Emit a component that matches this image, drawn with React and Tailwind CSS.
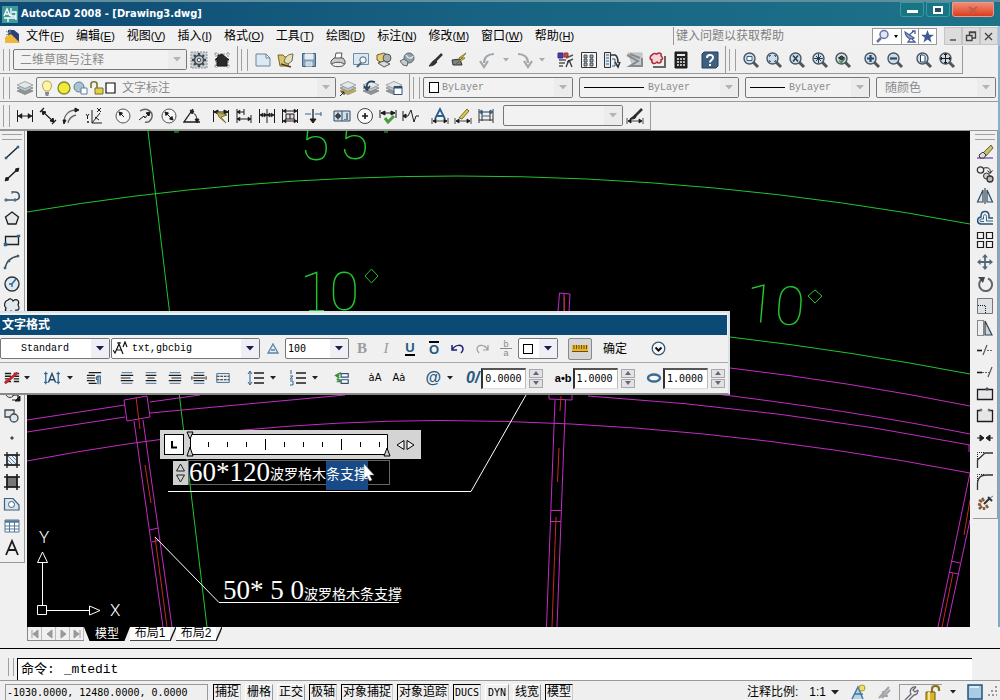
import React from "react";

const K = "#1c1c1c";
const B = "#2f6591";

const P = ({ d, s = K, f = "none", w = 1, ...rest }) => (
  <path d={d} stroke={s} fill={f} strokeWidth={w} {...rest} />
);
const Lens = ({ children }) => (
  <>
    <P d="M11 11L16 16" s="#555" w={3} />
    <circle cx="7.5" cy="7.5" r="5.5" fill="#cfdce6" stroke="#4a5560" strokeWidth="1.4" />
    {children}
  </>
);
const Ends = () => <P d="M1.500 3V15M16.500 3V15" />;
const ARR = "M2 9L6 6.500V11.500ZM16 9L12 6.500V11.500Z";
const Sheets = () => (
  <>
    <P d="M1 12L9 8.500L17 12L9 15.500Z" s="#777" f="#8f979c" w={0.7} />
    <P d="M1 9L9 5.500L17 9L9 12.500Z" s="#777" f="#b9c4ca" w={0.7} />
    <P d="M1 6L9 2.500L17 6L9 9.500Z" s="#888" f="#e3e8ea" w={0.7} />
  </>
);

const ART = {
  gear: (
    <>
      <P d="M1 1H17V17H1Z" s="#8b9297" f="#c9ced1" strokeDasharray="2 1" />
      <P d="M9 2V16M2 9H16M4 4L14 14M14 4L4 14" s="#3f4a52" w={2.4} />
      <circle cx="9" cy="9" r="4.500" fill="#c9ced1" stroke="#3f4a52" strokeWidth="1.500" />
      <circle cx="9" cy="9" r="1.800" fill="#eee" stroke="#3f4a52" />
    </>
  ),
  home: (
    <>
      <P d="M1 3H17M1 15H17M3 1V17M15 1V17" s="#8b9297" strokeDasharray="2 1" />
      <P d="M2 9L5 6V4H7L9 3L16 9H14V15H4V9Z" s={K} f="#2a2a2a" />
    </>
  ),
  new: <P d="M2 3H12L16 7V15H2ZM12 3V7H16" s="#6486a3" f="#dce9f3" />,
  open: (
    <>
      <P d="M3 15L1 4H6L8 6H13L11 15Z" s="#77652a" f="#d8c46a" />
      <P d="M7 11C8 5 12 3 16 3L15 10L11 13Z" s="#666" f="#e9e0b0" />
      <P d="M4 13L14 16" s="#4c4215" w={1.500} />
    </>
  ),
  save: (
    <>
      <P d="M2.500 2.500H15.500V15.500H2.500Z" s="#41617c" f="#7fa0ba" />
      <P d="M5 3H13V8H5Z" s="#e5edf3" f="#e5edf3" />
      <P d="M6 11H12V15H6Z" s="#dfe8ee" f="#c7d3dc" />
    </>
  ),
  print: (
    <>
      <P d="M6 7L7 2H13L12 7" s="#555" f="#fff" />
      <P d="M2 10L5 7H14L16 10V13H2Z" s="#555" f="#c6cbcf" />
      <ellipse cx="9" cy="13.500" rx="6" ry="2.200" fill="#eee" stroke="#555" />
    </>
  ),
  preview: (
    <>
      <P d="M1.500 2.500H16.500V13.500H1.500Z" s="#6c8fa9" f="#dbe8f0" />
      <circle cx="11" cy="9" r="3.200" fill="#eff6fa" stroke="#46657e" />
      <P d="M9 12L5 16" s="#46657e" w={2} />
    </>
  ),
  publish: (
    <>
      <P d="M2 4L9 2L14 5V9L7 12L2 9Z" s="#6c5f2a" f="#e6cf76" />
      <circle cx="12" cy="7" r="4" fill="#a8b3b9" stroke="#555" />
      <P d="M3 12L9 10L15 13L9 16Z" s="#555" f="#ddd" />
    </>
  ),
  dwf: (
    <>
      <circle cx="11" cy="7" r="5" fill="#8ca0a8" stroke="#666" />
      <P d="M8 4C10 8 14 8 15 5" s="#dfe9ec" w={1.500} />
      <P d="M2 10L6 8L10 11L9 15L5 14Z" s="#666" f="#c5cacd" />
    </>
  ),
  brush: (
    <>
      <P d="M15 3L8 10" s="#333" w={2.500} />
      <P d="M2 15C4 13 5 10 8 9L10 11C8 14 5 15 2 15Z" s="#333" f="#333" />
    </>
  ),
  block: (
    <>
      <P d="M2 9L10 8L12 14H3Z" s="#333" f="#7b8387" />
      <P d="M16 2L9 7H12L6 13L15 7H12Z" s="#6d6314" f="#e1d14e" w={0.8} />
    </>
  ),
  undoBig: <P d="M15 3C9 3 5 6 5 12M1 10L5 16L9 10" s="#a3a8ac" w={2.200} />,
  redoBig: <P d="M3 3C9 3 13 6 13 12M9 10L13 16L17 10" s="#a3a8ac" w={2.200} />,
  props: (
    <>
      <P d="M1 2H6V7H1Z" s="#3a2b8c" f="#4a3aa8" />
      <P d="M7 2H11V6H7Z" s="#a33" f="#c64545" />
      <P d="M2 9H9M2 12H8M2 15H6M9 7L16 4M10 11L16 8" s="#555" w={1.400} />
      <P d="M12 9L9 16M12 9L15 16" s="#333" w={1.300} />
    </>
  ),
  center: (
    <>
      <P d="M1.500 1.500H16.500V16.500H1.500Z" s="#333" f="#f5f7f8" />
      <P d="M4 4H7V7H4ZM4 8H7V11H4ZM4 12H7V15H4ZM10 4H13V7H10ZM10 8H13V11H10ZM10 12H13V15H10Z" s="#333" f="#9db0bd" w={0.800} />
    </>
  ),
  palettes: (
    <>
      <P d="M1.500 1.500H7.500V16.500H1.500Z" s="#333" f="#dfe9f0" />
      <P d="M3 4H6M3 7H6M3 10H6M3 13H6" s={B} />
      <P d="M8 4H12C15 5 15 9 15 12M12 11L15 16L17 11" s="#333" w={1.600} />
      <P d="M9 8H12V15H9" s={B} />
    </>
  ),
  sheetset: (
    <>
      <P d="M2 2H16V15H7Z" s="#bbb" f="#c4c9cc" />
      <P d="M1 4L12 10L4 15H16V7M4 3L14 7" s="#858c91" w={2} />
    </>
  ),
  markup: (
    <>
      <P d="M4 16H16V5" s="#666" w={2} />
      <P d="M3 4C5 1 7 3 8 3C10 1 13 2 12 5C15 7 13 9 12 9C13 12 9 13 8 11C5 14 2 12 3 9C0 8 1 5 3 4Z" s="#ab2b35" f="#f5d5d8" w={1.500} />
    </>
  ),
  calc: (
    <>
      <P d="M3 1H15V17H3Z" f="#222" />
      <P d="M5 4H13" s="#e8e8e8" w={2} />
      <P d="M5 8H13M5 11H13M5 14H13" s="#eee" w={1.600} strokeDasharray="2 1" />
    </>
  ),
  help: (
    <>
      <P d="M1 3L3 1H17V15L15 17H1Z" s="#23405a" f="#3d5f80" />
      <P d="M6 7C6 3 12 3 12 6.500C12 9 9 9 9 11.500M9 13V15" s="#fff" w={2} />
    </>
  ),
  zWin: <Lens><P d="M5 5.500H10V9.500H5Z" s={B} f="#fff" /></Lens>,
  zDyn: <Lens><P d="M4.500 6V4.500H6M9 4.500H10.500V6M10.500 9V10.500H9M6 10.500H4.500V9" s={B} /></Lens>,
  zScale: <Lens><P d="M5 4.500L10 10.500M10 4.500L5 10.500" s="#23405a" w={1.500} /></Lens>,
  zCenter: <Lens><P d="M7.500 3V12M3 7.500H12M5 5L10 10M10 5L5 10" s="#23405a" /></Lens>,
  zObj: <Lens><P d="M4.500 7L7.500 5L10.500 7L7.500 9Z" f="#444" /><P d="M5 9.500L7.500 11.500L11 7" s="#3e8a3e" w={1.500} /></Lens>,
  zIn: <Lens><P d="M7.500 4V11M4 7.500H11" s="#1f4a70" w={2.200} /></Lens>,
  zOut: <Lens><P d="M4 7.500H11" s="#1f4a70" w={2.200} /></Lens>,
  zAll: <Lens><P d="M5.500 4H8.500L10 5.500V11H5.500Z" s="#23405a" f="#fff" /></Lens>,
  zExt: <Lens><P d="M7.500 2.500V12.500M2.500 7.500H12.500M6 4L7.500 2.500L9 4M6 11L7.500 12.500L9 11M4 6L2.500 7.500L4 9M11 6L12.500 7.500L11 9" /></Lens>,
  layers: <Sheets />,
  layA: <><Sheets /><P d="M2 11L9 14L17 11" s="#c4ae45" w={2} /><P d="M1 17L5 13M2 13H5V16" /></>,
  layB: <><Sheets /><P d="M13 3C7 1 4 4 5 9M2 7L5 11L8 7" s="#1f3f5c" w={1.600} /></>,
  layC: <><Sheets /><P d="M9 7.500H17V15.500H9Z" s="#2c5377" f="#fff" /><P d="M9 8.500H17" s="#2c5377" w={2} /></>,
  dLin: <><Ends /><P d="M2 9H16" /><P d={ARR} f={K} w={0.500} /></>,
  dAli: <><P d="M1 5L5 1M13 17L17 13M3 4L15 15" w={1.200} /><P d="M3 4L7 5L4 8ZM15 15L11 14L14 11Z" f={K} /></>,
  dArc: <><P d="M2 15C2 8 7 3 14 3M6 16C7 11 10 9 14 8" s="#666" w={1.300} /><P d="M13 1L17 3L13 5ZM1 13H4L2 17Z" f={K} /></>,
  dOrd: <><P d="M7 3V16H17M7 16L15 6M10 10L14 13" /><P d="M1 7L2.500 9L4 7M2.500 9V12M12 1L16 5M16 1L12 5" /><circle cx="3" cy="15" r="1" fill={K} /></>,
  dRad: <><circle cx="9" cy="9" r="7" fill="#f6f6f6" stroke="#555" /><P d="M10 10L5 5" /><P d="M5 5L8.500 6L6 8.500Z" f={K} /></>,
  dJog: <><P d="M3 4C9 0 16 4 15 10C14 14 11 16 8 15" s="#666" w={1.500} /><P d="M2 13L7 9L8 11L12 6" /><P d="M13 5L9 6L12 9Z" f={K} /></>,
  dDia: <><circle cx="9" cy="9" r="7" fill="#f6f6f6" stroke="#555" /><P d="M5 5L13 13" /><P d="M5 5L8.500 6L6 8.500ZM13 13L9.500 12L12 9.500Z" f={K} /></>,
  dAng: <><P d="M10 2L1 15H17" w={1.300} /><P d="M8 5C12 6 14 9 14 14" /><P d="M7 3L11 4L9 7ZM12 12L16 12L14 16Z" f={K} w={0.800} /></>,
  dQuick: <><Ends /><P d="M2 5H16" /><P d="M2 5L6 3V7ZM16 5L12 3V7Z" f={K} /><P d="M5 5L15 8L9 10L14 16L7 10Z" s="#7a7030" f="#bcb050" /></>,
  dBase: <><P d="M2 2V16M9 2V8M16 8V16" /><P d="M2 5H9M2 12H16" /><P d="M2 5L5 3V7ZM16 12L13 10V14ZM2 12L5 10V14Z" f={K} w={0.500} /></>,
  dCont: <><P d="M1.500 2V16M9 2V16M16.500 2V16M2 8H16" /><P d="M2 8L5 6V10ZM16 8L13 6V10ZM9 8L6 6V10ZM9 8L12 6V10Z" f={K} w={0.500} /></>,
  dTol: <><P d="M1.500 2V16M16.500 2V16M2 4H16M2 14H16" /><P d="M5 7H13V12H5ZM9 7V12" f="#e7d6d6" /><P d="M2 4L5 2V6ZM16 4L13 2V6ZM2 14L5 12V16ZM16 14L13 12V16Z" f={K} w={0.500} /></>,
  dBreak: <><P d="M1 7H7M11 7H17M17 5V9" s={B} /><P d="M9 2V12" w={1.300} /><P d="M6 12L9 16L12 12Z" f={K} /></>,
  dTolBox: <><P d="M1 4H17V14H1ZM9 4V14" s="#2d4a63" f="#cfe0ea" /><circle cx="5" cy="9" r="2" fill="none" stroke={K} /><P d="M5 5.500V12.500M2 9H8M12 12V13M14 6V13" /></>,
  dMark: <><circle cx="9" cy="9" r="7.500" fill="#fbfbfb" stroke="#444" /><P d="M9 6V12M6 9H12" w={1.600} /></>,
  dInsp: <><P d="M1 3V11M17 3V11M2 6H16" /><P d="M2 6L6 4V8ZM16 6L12 4V8Z" f={K} /><P d="M6 11L9 15L15 9" s="#4a9c3c" w={3} /></>,
  dJogL: <><P d="M1 4V14M1 9H6L9 3L12 15L14 9H17" /><P d="M1 9L4 7V11Z" f={K} /></>,
  dEdit: <><P d="M4 12L9 2L14 12M6 9H12" s="#2d5f8f" w={1.800} /><P d="M1 11V17M17 11V17M2 14H16M2 14L5 12V16ZM16 14L13 12V16Z" f={K} w={0.800} /></>,
  dTedit: <><P d="M5 11L13 2L15 4L8 12Z" s="#7a7030" f="#d5c94f" /><P d="M1 11V17M17 11V17M2 14H16M2 14L5 12V16ZM16 14L13 12V16Z" f={K} w={0.800} /></>,
  dUpd: <><P d="M2 2V16M5 4V14M16 2V16M13 4V14M2 5H16M2 13H16" s="#333" /><P d="M2 5L5 3V7ZM16 5L13 3V7ZM5 9H13" s={B} f={B} /></>,
  dStyle: <><P d="M16 2L9 9" s="#333" w={2.500} /><P d="M4 12C6 11 7 9 9 8L10 10C9 12 7 12 4 12Z" f="#333" /><P d="M1 11V17M17 11V17M2 14H16M2 14L5 12V16ZM16 14L13 12V16Z" f={K} w={0.800} /></>,
  line: <><P d="M3 15L15 4" w={1.300} /><P d="M2 14H4V16H2ZM14 3H16V5H14Z" s={B} f={B} w={0.500} /></>,
  xline: <><P d="M2 16L16 3" w={1.500} /><circle cx="4" cy="14" r="2" /><circle cx="14" cy="5" r="2" /></>,
  pline: <><P d="M3 13H13C18 12 17 5 12 5H9" s="#3f5568" w={1.600} /><P d="M2 12H4V14H2ZM9 4V7M12 11V15" s={B} /></>,
  polygon: <P d="M9 3L15.500 8L13 15H5L2.500 8Z" f="#e6e9eb" w={1.300} />,
  rect: <><P d="M2.500 5.500H15.500V13.500H2.500Z" f="#e6e9eb" w={1.300} /><P d="M1 12H4V15H1ZM14 4H17V6H14Z" s={B} f={B} w={0.500} /></>,
  arc: <><P d="M2 16C3 8 8 4 16 3" s="#444" w={1.300} /><P d="M1 14H3V16H1ZM5 7H7V9H5ZM14 2H16V4H14Z" s={B} f={B} w={0.500} /></>,
  circle: <><circle cx="9" cy="9" r="7" fill="#dceaf4" stroke="#333" strokeWidth="1.400" /><P d="M8 10L13 4M6 9H9V12" s={B} w={1.400} /></>,
  cloud: <P d="M5 3C7 1 9 2 10 4C14 1 17 4 15 8C17 11 16 14 13 13C13 16 9 17 8 14C5 17 1 15 3 11C0 8 2 4 5 3Z" f="#e4e8ea" w={1.200} />,
  spline: <P d="M2 13C4 1 8 3 9 9S14 16 16 5" />,
  ellipse: <ellipse cx="9" cy="9" rx="7" ry="4" fill="#e6e9eb" stroke={K} />,
  ellArc: <P d="M2 9C2 4 16 4 16 9C16 12 12 13 9 13" />,
  insert: <><circle cx="7" cy="8" r="4.500" fill="#e4e8ea" stroke="#444" /><P d="M9 10H15V15H9" w={1.200} /><P d="M17 11V16H12Z" f={K} /></>,
  make: <><P d="M2 3H11V10H2Z" s="#444" f="#dfe5ea" w={1.300} /><circle cx="11" cy="11" r="4" fill="#dce8ee" stroke="#444" strokeWidth="1.300" /></>,
  point: <P d="M8 8H10V10H8Z" s="#444" f="#444" />,
  hatch: <><P d="M4 4H14V14H4Z" f="#e9f0f5" /><P d="M4 4L14 14M4 8L10 14M8 4L14 10M4 11L7 14M11 4L14 7" s="#5d7e99" /><P d="M4 1V17M14 1V17M1 4H17M1 14H17" w={1.300} /></>,
  gradient: <><P d="M4 4H14V14H4Z" f="#777" /><P d="M4 1V17M14 1V17M1 4H17M1 14H17" w={1.600} /></>,
  region: <><P d="M1.500 3.500H10L16 10V15H1.500Z" s="#3d607c" f="#d8e5ee" w={1.200} /><circle cx="8.500" cy="9.500" r="3" fill="#fff" stroke="#3d607c" /></>,
  table: <><P d="M2 3H16V15H2Z" s="#54779a" f="#fff" /><P d="M2 4.500H16" s="#54779a" w={2.500} /><P d="M2 9H16M2 12H16M6.500 4V15M11.500 4V15" s="#54779a" /></>,
  mtext: <P d="M3 16L9 2L15 16M5 11H13" w={1.800} />,
  erase: <><P d="M1 15H17" s="#6a4db5" w={1.300} /><P d="M7 10L15 2L17 5L10 13Z" s="#6b6531" f="#c6bf76" /><P d="M3 12L7 9L10 12L8 15H4Z" s="#333" f="#ddd" /></>,
  copy: <><circle cx="4.500" cy="5" r="3.200" fill="none" stroke="#333" strokeWidth="1.300" /><P d="M8 3C13 2 15 4 14 8M11.500 5.500L14 8.500L16.500 5.500" /><circle cx="10.500" cy="11" r="3" fill="#ccc" stroke="#333" /><circle cx="14" cy="14" r="3" fill="#bbb" stroke="#333" strokeWidth="1.300" /></>,
  mirror: <><P d="M7 3V15H1.500ZM11 3V15H16.500Z" s="#2b4a63" f="#dfe8ee" w={1.200} /><P d="M9 1V17" /></>,
  offset: <><P d="M17 9H13V7C13 1 5 1 5 7V8C0 9 1 15 5 15H17" s="#2c5377" w={1.500} /><P d="M17 12H10.500V7.500C10.500 5 7.500 5 7.500 7.500V10H5C3.500 10.500 3.500 12.500 5 12.500H8" s={B} /></>,
  array: <P d="M1.500 1.500H7.500V7.500H1.500ZM10.500 1.500H16.500V7.500H10.500ZM1.500 10.500H7.500V16.500H1.500ZM10.500 10.500H16.500V16.500H10.500Z" f="#f4f4f4" w={1.200} />,
  move: <><P d="M9 3V15M3 9H15" s="#54687a" w={1.800} /><P d="M9 1L12 4.500H6ZM9 17L6 13.500H12ZM1 9L4.500 6V12ZM17 9L13.500 12V6Z" s="none" f="#54687a" /></>,
  rotate: <><P d="M5 5A6.500 6.500 0 1 0 12 3.500" s="#5e666c" w={2} /><P d="M2 2H9L7 8Z" s="none" f="#3f474d" /></>,
  scale: <><P d="M1.500 1.500H16.500V16.500H1.500Z" s="#777" f="#dfe2e4" /><P d="M2 8.500H9.500V16" strokeDasharray="1 1" /></>,
  stretch: <><P d="M9 2L16 16H9Z" s="#33414c" f="#ccd3d8" w={1.200} /><P d="M1.500 1.500H7.500V16.500H1.500Z" strokeDasharray="1 1" /></>,
  trim: <><P d="M7 14L11 4" s="#555" w={1.200} /><P d="M1 9.500H6" w={1.600} /><P d="M11 9.500H17" strokeDasharray="2 1" s="#666" /></>,
  extend: <><P d="M12 14L16 4" s="#555" w={1.200} /><P d="M1 9.500H6" w={1.600} /><P d="M6 9.500H13" strokeDasharray="2 1" s="#666" /></>,
  breakPt: <><P d="M1.500 4.500H16.500V14.500H1.500Z" f="#e4e6e8" w={1.300} /><P d="M10 3H12V5H10Z" f="#555" s="#555" /></>,
  brk: <><P d="M5 3.500H1.500V14.500H16.500V3.500H13" f="#e4e6e8" w={1.300} /><P d="M4 2H6V4H4ZM12 2H14V4H12Z" f="#777" s="#777" w={0.500} /></>,
  join: <P d="M1 9H5M17 9H13M4 6L8 9L4 12ZM14 6L10 9L14 12Z" f={K} />,
  chamfer: <><P d="M1.500 17V9L9 2H17" w={1.300} s="#333" /><P d="M1.500 8V1.500H8" strokeDasharray="1 1" /></>,
  fillet: <><P d="M1.500 17V10C2 5 5 2 10 2H17" w={1.300} s="#333" /><P d="M1.500 8V1.500H8" strokeDasharray="1 1" /></>,
  explode: <><P d="M3 5L6 7M2 9L5 10M3 14L6 11M8 15L8 12M6 3L8 6M12 13L10 10" s="#8a5a34" w={2.500} /><P d="M8 9L14 3M12 2L16 6" s="#333" w={2} /><P d="M14 3L17 1" s="#4f7fb0" /></>,
  undo: <P d="M3 5V10H8M3 10C6 4 14 4 14 9C14 11 13 12 12 13" s="#1b1f78" w={1.500} />,
  redo: <P d="M15 5V10H10M15 10C12 4 4 4 4 9C4 11 5 12 6 13" s="#9a9da1" w={1.200} />,
  cols: <><P d="M1 4H8M1 7H8M1 10H8M1 13H8M11 4H17M11 7H17M11 10H17M11 13H17" w={1.600} /><P d="M1 15L15 3" s="#c8202c" w={3} /></>,
  just: <><P d="M2 2V16M16 2V16M0 4H4M14 4H18M0 14H4M14 14H18" s={B} w={1.400} /><P d="M5 14L9 4L13 14M6 11H12" s="#1f4a70" w={1.600} /></>,
  para: <><P d="M3 3H17M1 6H10M1 9H10M1 12H10M3 15H12" w={1.300} /><P d="M16 16V7H13C11 8 11 11 13 11M13.500 7V16" s={B} w={1.400} /></>,
  al: <><P d="M3 3H15M3 15H15" s={B} /><P d="M2 6H16M2 9H13M2 12H16" w={1.300} /></>,
  ac: <><P d="M3 3H15M3 15H15" s={B} /><P d="M3 6H15M5 9H13M3 12H15" w={1.300} /></>,
  ar: <><P d="M3 3H15M3 15H15" s={B} /><P d="M2 6H16M5 9H16M2 12H16" w={1.300} /></>,
  aj: <><P d="M3 3H15M3 15H15" s={B} /><P d="M3 6H15M2 9H16M3 12H15" w={1.300} /><P d="M1 7V11M17 7V11" /></>,
  ad: <><P d="M2 4H16M2 14H16" s={B} /><P d="M2 7H16M2 11H16" strokeDasharray="3 1" w={1.300} /><P d="M2 4V14M16 4V14" s={B} /></>,
  spacing: <><P d="M3 3V15M1 5L3 2L5 5M1 13L3 16L5 13" s={B} /><P d="M7 4H17M7 9H17M7 14H17" w={1.300} /></>,
  num: <><P d="M2 1V5M1 7H4L1 10H4M1 12H4V16H1" s={B} /><P d="M7 4H17M7 9H17M7 14H17" w={1.300} /></>,
  field: <><P d="M8 4H16V8H8ZM8 11H16V15H8Z" s="#2c5377" w={1.300} f="#fff" /><P d="M8 3L2 6L6 9M2 6H6M3 10L8 12M3 13H8" s="#3b8f3b" w={1.800} /></>,
};

const Icon = ({ n, size = 18 }) => (
  <svg width={size} height={size} viewBox="0 0 18 18" fill={K} className="shrink-0" aria-hidden="true">
    {ART[n]}
  </svg>
);

const Tool = ({ n, label, children, className = "w-[23px]" }) => (
  <button type="button" aria-label={label || n} className={`flex h-[22px] shrink-0 items-center justify-center ${className}`}>
    {children || <Icon n={n} />}
  </button>
);

const Down = ({ color = "#222" }) => (
  <svg width="8" height="5" viewBox="0 0 8 5" className="shrink-0" aria-hidden="true">
    <path d="M0 0H8L4 4.500Z" fill={color} />
  </svg>
);
const SmallDown = ({ color = "#222" }) => (
  <svg width="6" height="4" viewBox="0 0 6 4" className="shrink-0" aria-hidden="true">
    <path d="M0 0H6L3 3.500Z" fill={color} />
  </svg>
);
const Drop = ({ label, color, className = "" }) => (
  <button type="button" aria-label={label} className={`flex h-[22px] w-[13px] shrink-0 items-center justify-center ${className}`}>
    <SmallDown color={color} />
  </button>
);

const Grip = () => <div className="mr-[3px] h-[22px] w-[7px] shrink-0 border-x border-[#a0a0a0]" />;
const Gap = () => <div className="w-[6px] shrink-0" />;
const Bar = ({ children }) => (
  <div className="flex h-full shrink-0 items-center border-r border-b border-[#9a9a9a] pr-[4px] pl-[3px]">
    <Grip />
    {children}
  </div>
);

const Combo = ({ label, value, lead, width, active, font = "", pad = "pl-[6px]" }) => (
  <div className={`flex h-[21px] shrink-0 items-center rounded-[2px] border border-[#777] ${active ? "bg-white text-black" : "bg-[#f2f2f2] text-[#8a8a8a]"} ${width}`}>
    {lead}
    <select aria-label={label} className={`h-full min-w-0 flex-1 appearance-none bg-transparent outline-none ${pad} ${font}`}>
      <option>{value}</option>
    </select>
    <span className={`pointer-events-none flex h-full w-[18px] shrink-0 items-center justify-center ${active ? "bg-[#eef0f6]" : "bg-[#ececec]"}`}>
      <Down color={active ? "#1c1c50" : "#b4b4b4"} />
    </span>
  </div>
);

const MONO = "font-['Liberation_Mono','Noto_Sans_CJK_SC',monospace] text-[10px]";
const NUM = "font-['DejaVu_Sans_Mono','Noto_Sans_CJK_SC',monospace] text-[10px]";

const MENUS = [
  ["文件", "F"], ["编辑", "E"], ["视图", "V"], ["插入", "I"], ["格式", "O"], ["工具", "T"],
  ["绘图", "D"], ["标注", "N"], ["修改", "M"], ["窗口", "W"], ["帮助", "H"],
];

function TitleBar() {
  return (
    <header className="flex h-[26px] shrink-0 items-center border-t-2 border-[#5f8f9c] bg-linear-to-r from-[#0f4a73] via-[#186383] to-[#1d7388] pl-[2px]">
      <svg width="16" height="17" viewBox="0 0 16 17" aria-hidden="true">
        <rect width="16" height="17" fill="#3f9a9c" />
        <path d="M2 10L5 3L8 10M3 8H7M9 2V10H14M2 12H14M10 6H14V14M6 12V16" stroke="#fff" fill="none" strokeWidth="1.300" />
      </svg>
      <h1 className="ml-[3px] flex-1 font-['DejaVu_Sans_Condensed','DejaVu_Sans',sans-serif] text-[11px] font-bold text-white">
        AutoCAD 2008 - [Drawing3.dwg]
      </h1>
      <div className="flex h-full items-start gap-[2px] pr-[6px]">
        <button type="button" aria-label="最小化" className="flex h-[15px] w-[24px] items-end justify-center rounded-b-[3px] border border-[#3c98a3] bg-[#177584] pb-[3px]">
          <span className="h-[3px] w-[11px] bg-white" />
        </button>
        <button type="button" aria-label="最大化" className="flex h-[15px] w-[24px] items-center justify-center rounded-b-[3px] border border-[#3c98a3] bg-[#177584]">
          <span className="h-[8px] w-[10px] border-2 border-white bg-[#23505c]" />
        </button>
        <button type="button" aria-label="关闭" className="flex h-[15px] w-[42px] items-center justify-center rounded-b-[3px] border border-[#e99] bg-linear-to-b from-[#ef8a72] to-[#dc3a17]">
          <svg width="10" height="8" viewBox="0 0 10 8" aria-hidden="true"><path d="M1 1L9 7M9 1L1 7" stroke="#c25a48" strokeWidth="2" /></svg>
        </button>
      </div>
    </header>
  );
}

function MenuBar() {
  return (
    <nav className="flex h-[20px] shrink-0 items-center border-r-2 border-[#9cc4dc] bg-[#f1f1f1] pl-[4px]">
      <svg width="17" height="16" viewBox="0 0 17 16" aria-hidden="true">
        <path d="M4 2H10L15 6V14H4Z" fill="#2d3f78" />
        <path d="M1 9L7 6L16 15H1Z" fill="#f0b63a" />
        <path d="M2 3L5 5M6 1V5M2 7L5 6" stroke="#79a" />
      </svg>
      <div className="flex flex-1 gap-[12px] pl-[5px] text-[12px] text-black">
        {MENUS.map(([t, k]) => (
          <button type="button" key={k} className="whitespace-nowrap">
            {t}<span className="text-[11px]">(<u>{k}</u>)</span>
          </button>
        ))}
      </div>
      <input aria-label="帮助搜索" placeholder="键入问题以获取帮助" className="h-[18px] w-[199px] border-l border-[#999] pl-[2px] text-[12px] outline-none placeholder:text-[#808080]" />
      <div className="flex h-[17px] border border-[#999] bg-white">
        <button type="button" aria-label="搜索" className="flex w-[28px] items-center justify-center gap-[4px]">
          <svg width="14" height="14" viewBox="0 0 14 14" aria-hidden="true"><circle cx="8" cy="5.500" r="4" fill="#dfe6fa" stroke="#66719c" strokeWidth="1.500" /><path d="M5 9L1 13" stroke="#66719c" strokeWidth="2.500" /></svg>
          <svg width="4" height="3" viewBox="0 0 4 3" aria-hidden="true"><path d="M0 0H4L2 3Z" /></svg>
        </button>
        <button type="button" aria-label="通讯中心" className="flex w-[17px] items-center justify-center border-l border-[#999]">
          <svg width="13" height="13" viewBox="0 0 13 13" aria-hidden="true"><path d="M1 2C2 8 6 10 10 8Z" fill="#99a9d4" stroke="#4a5f96" strokeWidth="1.200" /><path d="M5 5L10 1M8 1H11V4M6 9L4 12H11L8 9" fill="none" stroke="#4a5f96" strokeWidth="1.300" /></svg>
        </button>
        <button type="button" aria-label="收藏夹" className="flex w-[18px] items-center justify-center border-l border-[#999]">
          <svg width="13" height="13" viewBox="0 0 13 13" aria-hidden="true"><path d="M6.500 0L8.200 4.700H13L9.200 7.700L10.600 12.500L6.500 9.600L2.400 12.500L3.800 7.700L0 4.700H4.800Z" fill="#3d5a94" /></svg>
        </button>
      </div>
      <div className="ml-[7px] flex h-[18px] bg-[#dcdcdc]">
        {[["最小化图形", "M3 10H9"], ["还原图形", "M1.500 5.500H7V10.500H1.500ZM4.500 5V2H10.500V8H7M4 2.500H10"], ["关闭图形", "M2 3L9 10M9 3L2 10"]].map(([l, d]) => (
          <button type="button" key={l} aria-label={l} className="flex w-[18px] items-center justify-center border border-[#c4c4c4]">
            <svg width="12" height="12" viewBox="0 0 12 12" aria-hidden="true"><path d={d} stroke="#444" strokeWidth="1.400" fill="none" /></svg>
          </button>
        ))}
      </div>
    </nav>
  );
}

const tools = (list) => list.split(" ").map((n) => <Tool key={n} n={n} />);

function Toolbars() {
  return (
    <div className="shrink-0 border-r-2 border-[#7fb3c9] text-[12px]">
      <div className="flex h-[28px]">
        <Bar>
          <Combo label="工作空间" value="二维草图与注释" width="w-[174px]" />
          {tools("gear home")}
        </Bar>
        <Bar>
          {tools("new open save")}<Gap />
          {tools("print preview publish dwf")}<Gap />
          {tools("brush block")}<Gap />
          <Tool n="undoBig" /><Drop label="放弃列表" color="#aaa" />
          <Tool n="redoBig" /><Drop label="重做列表" color="#aaa" /><Gap />
          {tools("props center palettes sheetset markup calc")}<Gap />
          {tools("help")}
        </Bar>
        <Bar>
          {tools("zWin zDyn zScale zCenter zObj")}<Gap />
          {tools("zIn zOut")}<Gap />
          {tools("zAll zExt")}
        </Bar>
      </div>
      <div className="flex h-[28px]">
        <Bar>
          {tools("layers")}
          <Combo
            label="图层"
            value="文字标注"
            width="w-[300px]"
            lead={
              <svg width="76" height="16" viewBox="0 0 76 16" className="ml-[3px] shrink-0" aria-hidden="true">
                <path d="M5 11C1 7 2 1 7 1S13 7 9 11Z" fill="#fdf6a8" stroke="#b7a63c" />
                <path d="M5 13H9M5.500 15H8.500" stroke="#667" strokeWidth="1.500" />
                <circle cx="24" cy="8" r="6" fill="#f2e93a" stroke="#7f8a2c" strokeWidth="1.300" />
                <circle cx="39" cy="7" r="5" fill="#a9c3d3" stroke="#5f7f96" />
                <path d="M41 8H47V14H41Z" fill="#fff" stroke="#5f7f96" />
                <path d="M51 8V4C51 1 57 1 57 4V8" fill="none" stroke="#77732a" strokeWidth="1.600" />
                <path d="M55 8H63V14H55Z" fill="#e2d24a" stroke="#77732a" />
                <path d="M66 3H75V13H66Z" fill="#fff" stroke="#111" strokeWidth="1.200" />
              </svg>
            }
          />
          {tools("layA layB layC")}
        </Bar>
        <div className="flex flex-1 items-center gap-[6px] border-b border-[#9a9a9a] pl-[3px]">
          <div className="flex items-center">
            <Grip />
            <Combo label="颜色" value="ByLayer" width="w-[150px]" font={MONO} pad="pl-[3px]" lead={<span className="ml-[5px] h-[11px] w-[10px] border border-black bg-white" />} />
          </div>
          <Combo label="线型" value="ByLayer" width="w-[160px]" font={MONO} pad="pl-[4px]" lead={<span className="ml-[4px] h-px w-[60px] bg-black" />} />
          <Combo label="线宽" value="ByLayer" width="w-[125px]" font={MONO} pad="pl-[4px]" lead={<span className="ml-[4px] h-px w-[35px] bg-black" />} />
          <Combo label="打印样式" value="随颜色" width="w-[120px]" pad="pl-[8px]" />
        </div>
      </div>
      <div className="flex h-[29px] border-b border-[#8f9a8f]">
        <Bar>
          {tools("dLin dAli dArc dOrd")}<Gap />
          {tools("dRad dJog dDia dAng")}<Gap />
          {tools("dQuick dBase dCont dTol dBreak")}<Gap />
          {tools("dTolBox dMark dInsp dJogL")}<Gap />
          {tools("dEdit dTedit dUpd")}<Gap />
          <Combo label="标注样式" value="" width="w-[120px]" />
          {tools("dStyle")}
        </Bar>
      </div>
    </div>
  );
}

const SideBar = ({ list, label, side }) => (
  <aside aria-label={label} className={`shrink-0 bg-[#f0f0f0] ${side}`}>
    <div className="flex flex-col items-center border-r border-b border-[#9a9a9a] pt-[3px]">
      <div className="mb-[1px] h-[6px] w-[20px] border-y border-[#a0a0a0]" />
      {tools(list)}
      <div className="h-[3px]" />
    </div>
  </aside>
);

const CAD = "'Liberation Serif', 'Noto Sans CJK SC', serif";

function Drawing() {
  return (
    <svg className="block h-full w-full" viewBox="27 131 943 496" preserveAspectRatio="xMinYMin slice" fill="none" role="img" aria-label="图形">
      <g stroke="#22c52e">
        <path d="M27 212Q240 176 458 176Q715 176 970 224M730 337Q850 351 970 374M148 131L207 627" />
        <path d="M371.500 269L378 276L371.500 283L365 276ZM815 290L822 296L815 303L808 296Z" />
        <path d="M174 132H179M384 132H388" />
        <path d="M309 310.500H324" />
      </g>
      <g fill="#22c52e" fontFamily="Roboto, sans-serif" fontWeight="100" fontSize="54">
        <text x="300" y="160">5</text>
        <text x="339" y="159">5</text>
        <text x="300" y="310">10</text>
        <text x="744" y="321" transform="rotate(5 744 321)">10</text>
      </g>
      <g stroke="#c42cc4">
        <path d="M27 420L125 405M150 402L200 395M27 432L125 417M150 413L345 395" />
        <path d="M27 461Q235 421 440 420.500Q700 421 970 473" />
        <path d="M730 368Q850 382 970 406M700 392Q850 410 970 434M588 396Q780 408 970 445" />
        <path d="M124 400L147 396L150 417L127 421ZM134 421L163 627M143 420L172 627M150 530L158 528M152 542L160 540" />
        <path d="M558 312L559.500 293L570 294L569 312M564 294V311M549 390V399L572 400V390M555 400L546.500 627M565.500 400L557 627M551 510.500H561M551 521.500H561" />
        <path d="M970 473L938 627M970 520L947 627M951 561L960 563M949 572L958 574M969 445V452" />
      </g>
      <g stroke="#c22a22">
        <path d="M136 397L140 429M145 465L151 503M155 537L167 627" />
        <path d="M561 396L560 411M559 448L557.500 482M556 517L552 627M970 500L964 535M953 573L942 627M564.500 297V311" />
      </g>
      <g stroke="#fff">
        <path d="M168 491.500H471L526 395M155 537L219 602.500H399" />
        <path d="M37.500 605.500H46.500V614.500H37.500ZM42.500 605V563M42.500 552L37.500 562.500H47.500ZM47 610.500H89M100 610.500L89.500 606V615Z" />
      </g>
      <g fill="#fff">
        <text x="223" y="599" fontFamily={CAD} fontSize="27">
          50* 5 0<tspan fontSize="14">波罗格木条支撑</tspan>
        </text>
        <text x="39" y="543" fontFamily="Roboto, sans-serif" fontWeight="300" fontSize="17">Y</text>
        <text x="110" y="616" fontFamily="Roboto, sans-serif" fontWeight="300" fontSize="17">X</text>
      </g>
    </svg>
  );
}

function InlineEditor() {
  return (
    <div className="absolute top-[299px] left-[160px]">
      <div className="flex h-[29px] items-center bg-[#d4d4d4] px-[4px]">
        <button type="button" aria-label="制表符" className="flex h-[21px] w-[20px] items-center justify-center border border-black bg-white">
          <svg width="8" height="8" viewBox="0 0 8 8" aria-hidden="true"><path d="M2 0V6.500H7" stroke="#000" strokeWidth="2" fill="none" /></svg>
        </button>
        <svg width="210" height="29" viewBox="0 0 210 29" aria-hidden="true">
          <path d="M6.500 4.500H203.500V24.500H6.500Z" fill="#fff" stroke="#000" />
          <path d="M24.500 12V17M43.500 12V17M62.500 12V17M81.500 9V20M100.500 12V17M119.500 12V17M138.500 12V17M157.500 9V20M176.500 12V17M195.500 12V17" stroke="#000" />
          <path d="M3 2H9L6 9ZM6 17L9 26H3ZM203 18L206 26H200Z" fill="#ccc" stroke="#000" />
        </svg>
        <svg width="22" height="12" viewBox="0 0 22 12" className="ml-[1px]" aria-hidden="true">
          <path d="M9 1.500V10.500L2 6ZM12 1.500V10.500L19 6Z" fill="#eee" stroke="#000" />
        </svg>
      </div>
      <div className="flex pt-[1px] pl-[13px]">
        <div className="mt-[1px] flex h-[24px] w-[15px] items-center justify-center bg-[#cfcfcf]">
          <svg width="11" height="20" viewBox="0 0 11 20" aria-hidden="true"><path d="M1.500 8L5.500 1L9.500 8ZM1.500 12H9.500L5.500 19Z" fill="none" stroke="#222" /></svg>
        </div>
        <div
          role="textbox"
          aria-label="多行文字"
          contentEditable
          suppressContentEditableWarning
          className="flex h-[25px] w-[202px] items-center border border-[#666] font-['Noto_Sans_CJK_SC',sans-serif] text-[14px] whitespace-nowrap text-white outline-none"
        >
          <span className="font-['Liberation_Serif',serif] text-[27px]">60*120</span>
          <span className="leading-[24px]">波罗格木</span>
          <span className="self-start bg-[#174a86] pb-[5px] leading-[24px]">条支撑</span>
        </div>
      </div>
    </div>
  );
}

const Num = ({ label, value }) => (
  <div className="flex items-center gap-[3px]">
    <input aria-label={label} defaultValue={value} className={`h-[21px] w-[45px] border-t-2 border-r border-b border-l-2 border-t-[#555] border-r-[#bbb] border-b-[#ddd] border-l-[#333] bg-white pl-[2px] font-normal outline-none ${NUM}`} />
    <div className="flex flex-col gap-px">
      <button type="button" aria-label={`${label} +`} className="flex h-[9px] w-[14px] items-center justify-center border border-[#a8a8a8] bg-[#e2e2e6]">
        <svg width="6" height="4" viewBox="0 0 6 4" aria-hidden="true"><path d="M0 4H6L3 0Z" fill="#667" /></svg>
      </button>
      <button type="button" aria-label={`${label} -`} className="flex h-[9px] w-[14px] items-center justify-center border border-[#a8a8a8] bg-[#e2e2e6]">
        <svg width="6" height="4" viewBox="0 0 6 4" aria-hidden="true"><path d="M0 0H6L3 4Z" fill="#667" /></svg>
      </button>
    </div>
  </div>
);

function TextFormat() {
  return (
    <section aria-label="文字格式" className="absolute top-[180px] left-0 w-[730px] border-t-2 border-r-2 border-b-2 border-[#d9e2e6] border-b-[#8a8a8a] bg-[#f0f0f0] pt-[2px] text-black">
      <h2 className="mr-[1px] flex h-[20px] items-center bg-[#0b4a74] pl-[2px] text-[12px] font-bold text-white">文字格式</h2>
      <div className="flex h-[28px] items-center border-b border-[#a8a8a8]">
        <Combo active label="样式" value="Standard" width="w-[110px]" font={MONO} pad="pl-[20px]" />
        <div className="w-[1px]" />
        <Combo
          active
          label="字体"
          value="txt,gbcbig"
          width="w-[149px]"
          font={MONO}
          pad="pl-[4px]"
          lead={<svg width="15" height="15" viewBox="0 0 15 15" className="ml-[1px] shrink-0" aria-hidden="true"><path d="M0 9L2 12L6 3L10 13M4 9H9M10 6L12 1L14 6M4 2H8M6 1V4" stroke="#111" fill="none" strokeWidth="1.200" /></svg>}
        />
        <Tool label="注释性" className="w-[25px]">
          <svg width="12" height="12" viewBox="0 0 12 12" aria-hidden="true"><path d="M1 10L6 1L11 10ZM4 7H8" fill="#e6eef4" stroke="#5784a8" strokeWidth="1.300" /></svg>
        </Tool>
        <Combo active label="文字高度" value="100" width="w-[64px]" font={NUM} pad="pl-[2px]" />
        <div className="flex items-center pl-[1px] font-['Liberation_Serif',serif] text-[15px]">
          <Tool label="粗体" className="w-[24px] font-bold text-[#9a9da0]">B</Tool>
          <Tool label="斜体" className="w-[24px] text-[#9a9da0] italic">I</Tool>
          <Tool label="下划线" className="w-[24px]"><span className="border-b-2 border-black font-['Liberation_Sans',sans-serif] text-[13px] leading-[13px] font-bold text-[#255a80]">U</span></Tool>
          <Tool label="上划线" className="w-[24px]"><span className="border-t-2 border-black pt-[1px] font-['Liberation_Sans',sans-serif] text-[13px] leading-[12px] font-bold text-[#255a80]">O</span></Tool>
          <Tool n="undo" className="w-[24px]" />
          <Tool n="redo" className="w-[24px]" />
          <Tool label="堆叠" className="w-[24px]">
            <span className="flex flex-col items-center font-['Liberation_Sans',sans-serif] text-[9px] leading-[8px] text-[#888]"><span className="border-b border-[#888] px-[3px]">b</span><span>a</span></span>
          </Tool>
        </div>
        <Combo active label="文字颜色" value="" width="w-[40px]" pad="pl-0" lead={<span className="ml-[4px] h-[10px] w-[10px] shrink-0 border border-black" />} />
        <button type="button" aria-label="标尺" className="ml-[10px] flex h-[22px] w-[24px] items-center justify-center rounded-[2px] border border-[#888] bg-[#d5d5d5]">
          <svg width="16" height="7" viewBox="0 0 16 7" aria-hidden="true"><rect width="16" height="7" fill="#e6b52c" /><path d="M2 0V4M4.500 0V4M7 0V4M9.500 0V4M12 0V4M14.500 0V4M0 6.500H16" stroke="#6b4f10" /></svg>
        </button>
        <button type="button" className="ml-[11px] text-[12px]">确定</button>
        <button type="button" aria-label="选项" className="ml-[24px] flex">
          <svg width="15" height="15" viewBox="0 0 15 15" aria-hidden="true"><circle cx="7.500" cy="7.500" r="6.300" fill="#f5f7f9" stroke="#3c5872" strokeWidth="1.300" /><path d="M4.500 6.500L7.500 9.500L10.500 6.500" stroke="#111" strokeWidth="2" fill="none" /></svg>
        </button>
      </div>
      <div className="flex h-[30px] items-center pl-[4px]">
        <Tool n="cols" className="w-[16px]"><Icon n="cols" size={16} /></Tool><Drop label="列" className="mr-[8px]" />
        <Tool n="just" className="w-[22px]"><Icon n="just" size={16} /></Tool><Drop label="对正" />
        <div className="w-[6px]" />
        <Tool n="para" className="w-[24px]"><Icon n="para" size={16} /></Tool>
        <div className="w-[9px]" />
        <div className="flex">
          {["al", "ac", "ar", "aj", "ad"].map((n) => <Tool key={n} n={n} className="w-[24px]"><Icon n={n} size={16} /></Tool>)}
        </div>
        <div className="w-[11px]" />
        <Tool n="spacing" className="w-[20px]" /><Drop label="行距" />
        <div className="w-[9px]" />
        <Tool n="num" className="w-[20px]" /><Drop label="编号" />
        <div className="w-[9px]" />
        <Tool n="field" className="w-[24px]"><Icon n="field" size={16} /></Tool>
        <div className="w-[9px]" />
        <div className="flex font-['DejaVu_Sans_Condensed','DejaVu_Sans',sans-serif] text-[11px]">
          <Tool label="大写" className="w-[24px]">ȧA</Tool>
          <Tool label="小写" className="w-[24px]">Aȧ</Tool>
        </div>
        <div className="w-[12px]" />
        <Tool label="符号" className="w-[20px] font-['Liberation_Sans',sans-serif] text-[16px] font-bold text-[#255a80] italic">@</Tool>
        <Drop label="符号列表" />
        <div className="flex flex-1 items-center justify-between pr-[3px] pl-[10px] font-['Liberation_Sans',sans-serif] font-bold">
          <div className="flex items-center gap-[2px]"><span className="text-[16px] text-[#255a80] italic">0/</span><Num label="倾斜角度" value="0.0000" /></div>
          <div className="flex items-center gap-[1px]"><span className="text-[11px]">a•b</span><Num label="追踪" value="1.0000" /></div>
          <div className="flex items-center gap-[1px]">
            <svg width="16" height="12" viewBox="0 0 16 12" aria-hidden="true"><ellipse cx="8" cy="6" rx="6" ry="3.500" fill="#f8f8f8" stroke="#3a6c92" strokeWidth="2.400" /></svg>
            <Num label="宽度因子" value="1.0000" />
          </div>
        </div>
      </div>
    </section>
  );
}

function LayoutTabs() {
  return (
    <div className="flex h-[21px] shrink-0 items-start bg-[#f0f0f0] pl-[27px] text-[12px]">
      <div className="flex h-[14px] border-b border-l border-[#888]">
        {[["第一个", "M3 2V10M9 2V10L4 6Z"], ["上一个", "M9 2V10L4 6Z"], ["下一个", "M4 2V10L9 6Z"], ["最后一个", "M3 2V10L8 6ZM9 2V10"]].map(([l, d]) => (
          <button type="button" key={l} aria-label={l} className="flex w-[14px] items-center justify-center border-r border-[#bbb]">
            <svg width="12" height="12" viewBox="0 0 12 12" aria-hidden="true"><path d={d} fill="#999" stroke="#999" /></svg>
          </button>
        ))}
      </div>
      <button type="button" className="h-[14px] w-[46px] bg-black leading-[13px] text-white [clip-path:polygon(0_0,100%_0,88%_100%,12%_100%)]">模型</button>
      {["布局1", "布局2"].map((t) => (
        <React.Fragment key={t}>
          <button type="button" className="h-[14px] w-[40px] border-b border-[#444] bg-white leading-[13px]">{t}</button>
          <svg width="6" height="14" viewBox="0 0 6 14" aria-hidden="true"><path d="M6 0L0 14" stroke="#111" strokeWidth="1.300" /></svg>
        </React.Fragment>
      ))}
    </div>
  );
}

const MODES = [
  ["捕捉", 1, "w-[28px]"], ["栅格", 0, "w-[28px]"], ["正交", 0, "w-[28px]"], ["极轴", 1, "w-[28px]"],
  ["对象捕捉", 1, "w-[52px]"], ["对象追踪", 1, "w-[52px]"], ["DUCS", 1, "w-[28px]"], ["DYN", 0, "w-[24px]"],
  ["线宽", 0, "w-[28px]"], ["模型", 1, "w-[28px]"],
];

function StatusBar() {
  return (
    <footer className="flex h-[19px] shrink-0 items-start bg-[#efefef] pt-[3px] pl-[5px] text-[12px] text-black">
      <div className={`h-[16px] w-[203px] border-x border-t border-[#999] pl-[1px] leading-[16px] whitespace-pre ${NUM}`}>-1030.0000, 12480.0000, 0.0000</div>
      <div className="flex flex-1 gap-[4px] pl-[5px]">
        {MODES.map(([t, on, w]) => (
          <button
            type="button"
            key={t}
            aria-pressed={!!on}
            className={`h-[16px] shrink-0 border-x border-t leading-[15px] whitespace-nowrap ${w} ${on ? "border-t-black border-r-[#ccc] border-l-black" : "border-t-white border-r-[#999] border-l-white"} ${t[0] === "D" ? NUM : ""}`}
          >
            {t}
          </button>
        ))}
      </div>
      <span className="leading-[16px]">注释比例:</span>
      <button type="button" aria-label="注释比例" className="ml-[11px] flex h-[16px] items-center gap-[5px]">1:1 <Down /></button>
      <div className="flex h-[16px] items-center pr-[2px] pl-[7px]">
        <Tool label="注释可见性" className="w-[25px]">
          <svg width="16" height="16" viewBox="0 0 16 16" aria-hidden="true"><path d="M1 15L7 3L12 15M4 10H12" stroke="#4477a4" fill="#b9d3e6" strokeWidth="1.500" /><circle cx="11" cy="4" r="3" fill="#f0e060" stroke="#a59b3c" /></svg>
        </Tool>
        <Tool label="自动缩放" className="w-[25px]">
          <svg width="16" height="16" viewBox="0 0 16 16" aria-hidden="true"><path d="M3 14L13 3M6 14L14 6M7 7V12H12" stroke="#a2a6aa" fill="none" strokeWidth="2.200" /></svg>
        </Tool>
        <div className="ml-[3px] flex h-[16px] items-center border-t border-l border-[#999]">
          <Tool label="设置" className="w-[22px]">
            <svg width="16" height="16" viewBox="0 0 16 16" aria-hidden="true"><path d="M2 15L8 9C6 5 9 1 13 2M5 16L11 10C14 10 15 8 15 5" stroke="#667" fill="none" strokeWidth="1.300" /><path d="M13 2L10 5L12 7L15 5" stroke="#667" fill="none" strokeWidth="1.300" /></svg>
          </Tool>
          <Tool label="锁定" className="w-[20px]">
            <svg width="17" height="16" viewBox="0 0 17 16" aria-hidden="true"><path d="M8 8V4C8 0 15 0 15 4V6" stroke="#8a7420" fill="none" strokeWidth="2.200" /><path d="M2 7H11V16H2Z" fill="#d9b52a" stroke="#6b5812" /><path d="M5 7V16" stroke="#f7e48a" strokeWidth="2" /></svg>
          </Tool>
        </div>
        <Drop label="状态栏菜单" className="ml-[4px]" />
        <Tool label="全屏显示" className="ml-[7px] w-[18px]">
          <svg width="16" height="16" viewBox="0 0 16 16" aria-hidden="true"><path d="M1 1H15V15H1Z" fill="#a9cbe6" stroke="#23537c" strokeWidth="1.500" /><path d="M3 3H12" stroke="#dcecf8" strokeWidth="2" /></svg>
        </Tool>
        <svg width="14" height="14" viewBox="0 0 14 14" aria-hidden="true"><path d="M11 2H13M7 6H13M4 10H13" stroke="#999" strokeWidth="2" strokeDasharray="2 2" /></svg>
      </div>
    </footer>
  );
}

export default function App() {
  return (
    <div className="flex h-screen flex-col overflow-hidden bg-[#f0f0f0] font-['Liberation_Sans','Noto_Sans_CJK_SC',sans-serif]">
      <TitleBar />
      <MenuBar />
      <Toolbars />
      <main className="relative flex min-h-0 flex-1 overflow-hidden">
        <SideBar label="绘图" side="w-[27px] pr-[2px]" list="line xline pline polygon rect arc circle cloud spline ellipse ellArc insert make point hatch gradient region table mtext" />
        <div className="min-w-0 flex-1 bg-black"><Drawing /></div>
        <SideBar label="修改" side="w-[30px] border-r-2 border-[#7fa9c4] pl-[3px]" list="erase copy mirror offset array move rotate scale stretch trim extend breakPt brk join chamfer fillet explode" />
        <InlineEditor />
        <TextFormat />
        <svg width="12" height="19" viewBox="0 0 12 19" className="absolute top-[332px] left-[363px]" aria-hidden="true">
          <path d="M1 1V16L4 13L6.500 18L9 17L6.500 12H11Z" fill="#fff" stroke="#888" strokeWidth="0.500" />
        </svg>
      </main>
      <LayoutTabs />
      <div className="flex h-[33px] shrink-0 border-t border-t-black border-b border-b-[#999] pt-[9px] pr-[28px] pl-[8px]">
        <div className="mr-[3px] h-[18px] w-[6px] border-x border-[#a0a0a0]" />
        <label className="flex flex-1 items-center border-t border-l border-black bg-white pl-[3px] font-['Liberation_Mono','Noto_Sans_CJK_SC',monospace] text-[13px] text-black">
          命令:
          <input defaultValue="_mtedit" className="h-full min-w-0 flex-1 bg-transparent pl-[9px] outline-none" />
        </label>
      </div>
      <StatusBar />
    </div>
  );
}
